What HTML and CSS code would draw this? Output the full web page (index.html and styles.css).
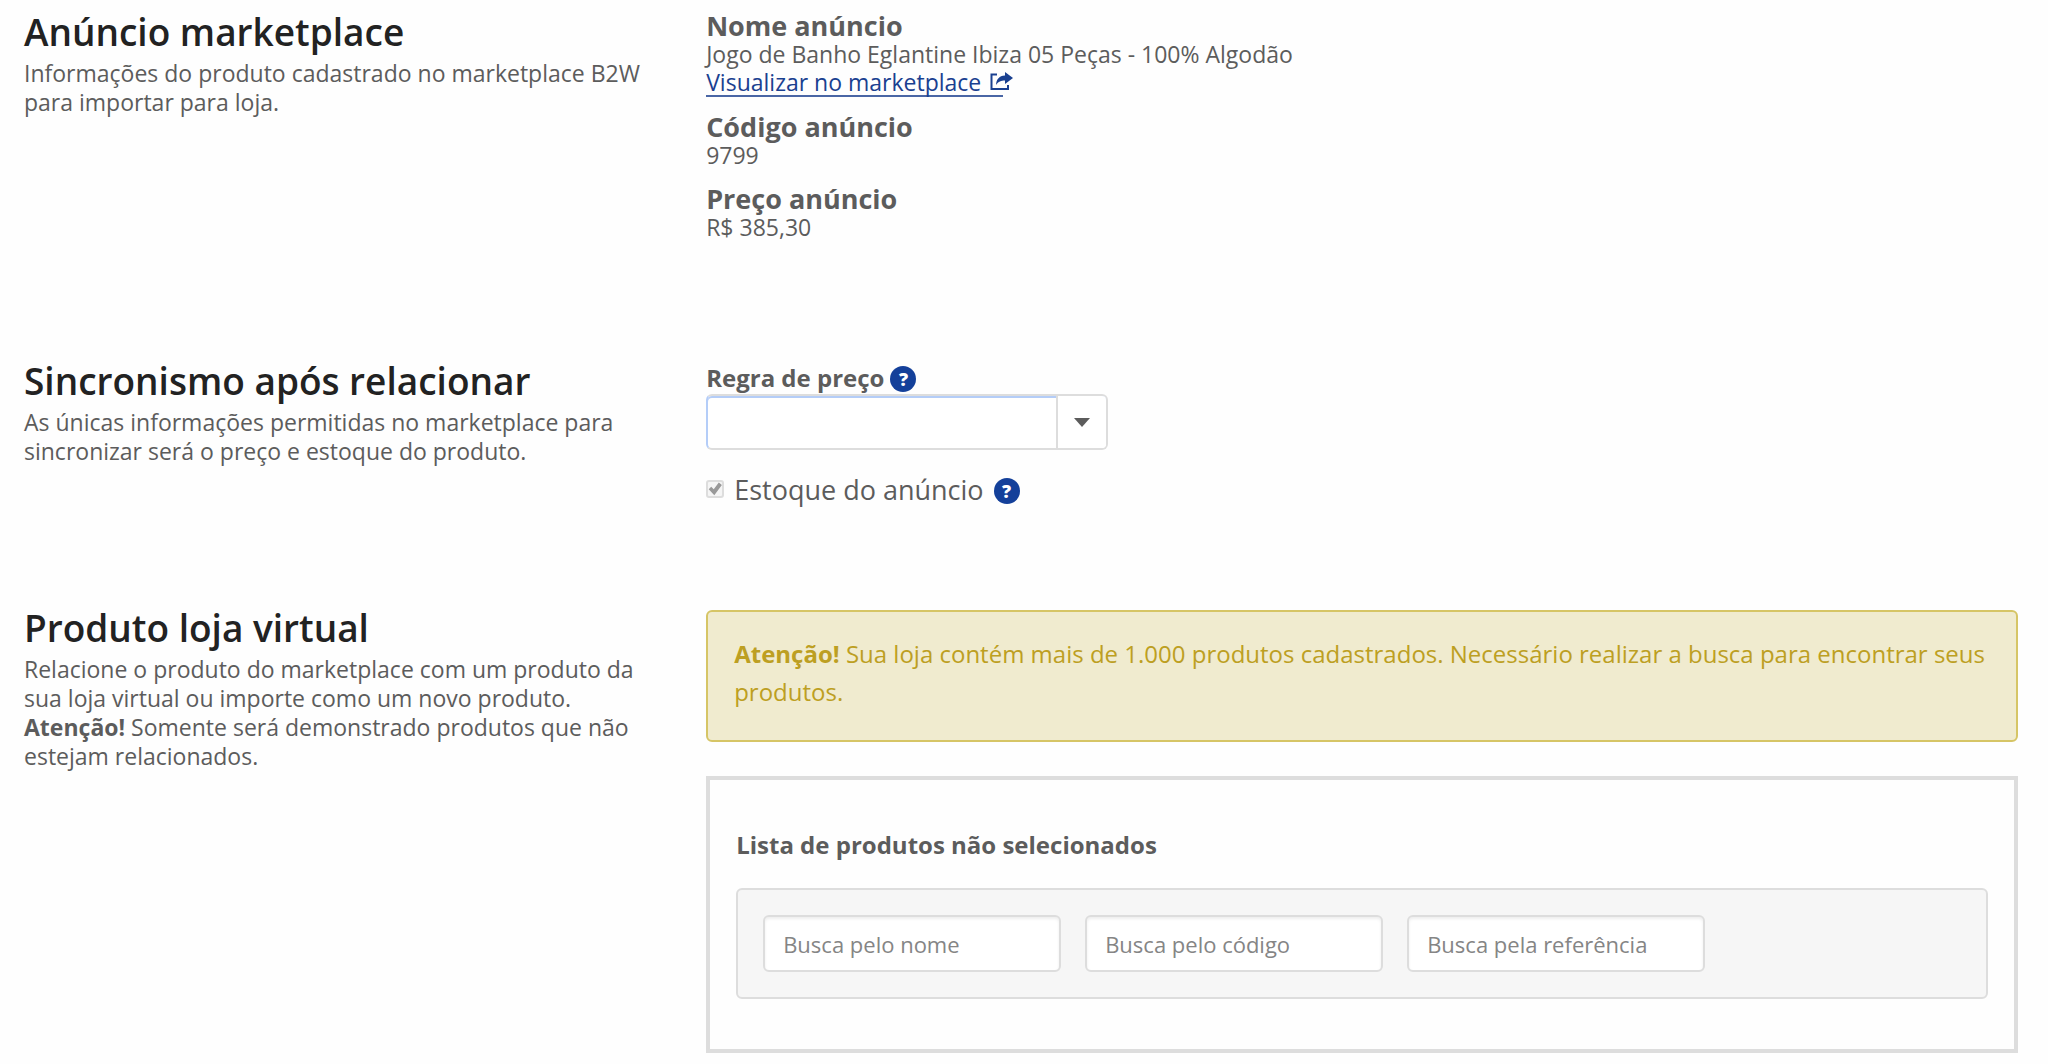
FILE: index.html
```html
<!DOCTYPE html>
<html lang="pt-BR">
<head>
    <meta charset="UTF-8">
    <meta name="viewport" content="width=device-width, initial-scale=1.0">
    <title>Anúncio marketplace</title>
    <link rel="stylesheet" href="styles.css">
</head>
<body>

    <!-- Dados do anúncio -->
    <section class="section section-ad">
        <div class="section-info">
            <h2>Anúncio marketplace</h2>
            <p>Informações do produto cadastrado no marketplace B2W para importar para loja.</p>
        </div>
        <div class="section-content">
            <dl class="ad-data">
                <dt>Nome anúncio</dt>
                <dd>Jogo de Banho Eglantine Ibiza 05 Peças - 100% Algodão</dd>
                <dd>
                    <a class="ad-link" href="#">Visualizar no marketplace
                        <svg class="icon-share" viewBox="0 0 23 19" aria-hidden="true">
                            <path d="M7 2.5H1.5V17H18v-4" fill="none" stroke="currentColor" stroke-width="2"/>
                            <path d="M15 0l8 6-8 6V8.500C11 8.500 8.500 9.500 6 13c0-5 3-9.500 9-9.500z" fill="currentColor"/>
                        </svg>
                    </a>
                </dd>
                <dt>Código anúncio</dt>
                <dd>9799</dd>
                <dt>Preço anúncio</dt>
                <dd>R$ 385,30</dd>
            </dl>
        </div>
    </section>

    <!-- Sincronismo -->
    <section class="section section-sync">
        <div class="section-info">
            <h2>Sincronismo após relacionar</h2>
            <p>As únicas informações permitidas no marketplace para sincronizar será o preço e estoque do produto.</p>
        </div>
        <div class="section-content">
            <div class="field-label">
                <label for="priceRule">Regra de preço</label>
                <button type="button" class="help" aria-label="Ajuda sobre regra de preço">?</button>
            </div>
            <div class="select-box">
                <select id="priceRule">
                    <option value="" selected></option>
                </select>
                <span class="select-arrow"></span>
            </div>
            <div class="check-row">
                <input type="checkbox" id="stock" checked disabled>
                <label for="stock">Estoque do anúncio</label>
                <button type="button" class="help" aria-label="Ajuda sobre estoque">?</button>
            </div>
        </div>
    </section>

    <!-- Produto da loja -->
    <section class="section section-product">
        <div class="section-info">
            <h2>Produto loja virtual</h2>
            <p>Relacione o produto do marketplace com um produto da sua loja virtual ou importe como um novo produto.<br>
            <strong>Atenção!</strong> Somente será demonstrado produtos que não estejam relacionados.</p>
        </div>
        <div class="section-content">
            <div class="alert">
                <strong>Atenção!</strong> Sua loja contém mais de 1.000 produtos cadastrados. Necessário realizar a busca para encontrar seus produtos.
            </div>
            <div class="product-box">
                <h3>Lista de produtos não selecionados</h3>
                <form class="filters">
                    <input type="text" name="nome" placeholder="Busca pelo nome" aria-label="Busca pelo nome">
                    <input type="text" name="codigo" placeholder="Busca pelo código" aria-label="Busca pelo código">
                    <input type="text" name="referencia" placeholder="Busca pela referência" aria-label="Busca pela referência">
                </form>
            </div>
        </div>
    </section>

</body>
</html>
```
FILE: styles.css
```css
* {
    box-sizing: border-box;
}

body {
    margin: 0;
    padding: 11px 30px 11px 24px;
    background-color: #fefefe;
    color: #5c5c5c;
    font-family: "Open Sans", sans-serif;
    font-size: 23px;
    line-height: 29px;
}

h2, h3, p, dl, dd {
    margin: 0;
}

.section {
    display: grid;
    grid-template-columns: 13fr 25fr;
}

.section-ad {
    margin-bottom: 118px;
}

.section-sync {
    margin-bottom: 103px;
}

.section-product .section-content {
    padding-top: 3px;
}

.section-info {
    padding-right: 48px;
}

.section-info h2 {
    margin-bottom: 6px;
    color: #222;
    font-size: 37px;
    font-weight: 600;
    line-height: 42px;
}

.ad-data dt {
    font-size: 27px;
    font-weight: bold;
}

.ad-data dd + dt {
    margin-top: 14px;
}

.ad-link {
    display: inline-block;
    border-bottom: 2px solid #4a66a5;
    color: #1a4090;
    line-height: 26px;
    text-decoration: none;
    vertical-align: top;
}

/* the icon hangs over the end of the underline */
.icon-share {
    width: 23px;
    height: 19px;
    margin-right: -10px;
    margin-left: 3px;
}

.field-label {
    display: flex;
    align-items: center;
    gap: 6px;
    height: 34px;
    font-size: 24px;
    font-weight: bold;
}

.help {
    width: 26px;
    height: 26px;
    margin-top: 4px;
    padding: 0;
    border: none;
    border-radius: 50%;
    background-color: #14409a;
    color: #fff;
    font-family: inherit;
    font-size: 18px;
    font-weight: 800;
    line-height: 26px;
    cursor: pointer;
}

.select-box {
    position: relative;
    width: 402px;
}

.select-box select {
    appearance: none;
    display: block;
    width: 100%;
    height: 56px;
    padding: 0 68px 0 18px;
    border: 2px solid #ddd;
    border-left-color: #b4cdf8;
    border-radius: 6px;
    background-color: #fff;
    box-shadow: inset 0 2px 0 #b4cdf8;
    color: #5c5c5c;
    font: inherit;
}

.select-arrow {
    position: absolute;
    top: 2px;
    right: 2px;
    bottom: 2px;
    width: 50px;
    border-left: 2px solid #ddd;
    border-radius: 0 4px 4px 0;
    background-color: #fff;
    display: flex;
    align-items: center;
    justify-content: center;
    pointer-events: none;
}

.select-arrow::before {
    content: "";
    border: 8px solid transparent;
    border-top: 9px solid #5c5c5c;
    border-bottom: 0;
}

.check-row {
    display: flex;
    align-items: center;
    margin-top: 24px;
    font-size: 27px;
}

.check-row label {
    margin: 0 10px;
}

.check-row input {
    appearance: none;
    width: 18px;
    height: 18px;
    margin: 0;
    border: 2px solid #ddd;
    border-radius: 3px;
    background-color: #f5f5f5;
}

.check-row input:checked::before {
    content: "";
    display: block;
    width: 14px;
    height: 14px;
    background-color: #999;
    clip-path: polygon(4% 52%, 22% 34%, 40% 52%, 76% 4%, 98% 22%, 44% 94%);
}

.alert {
    padding: 23px 26px 29px;
    border: 2px solid #d6c566;
    border-radius: 6px;
    background-color: #f0ebcf;
    color: #bd9f22;
    font-size: 24px;
    line-height: 38px;
}

.product-box {
    margin-top: 34px;
    padding: 50px 26px;
    border: 4px solid #ddd;
}

.product-box h3 {
    margin-bottom: 29px;
    font-size: 24px;
}

.filters {
    display: flex;
    flex-wrap: wrap;
    gap: 24px;
    padding: 25px;
    border: 2px solid #ddd;
    border-radius: 6px;
    background-color: #f6f6f6;
}

.filters input {
    width: 298px;
    height: 57px;
    padding: 0 18px;
    border: 2px solid #ddd;
    border-radius: 6px;
    background-color: #fff;
    box-shadow: inset 0 2px 3px #eee;
    color: #5c5c5c;
    font-family: inherit;
    font-size: 22px;
}

.filters input::placeholder {
    color: #858585;
}
```
